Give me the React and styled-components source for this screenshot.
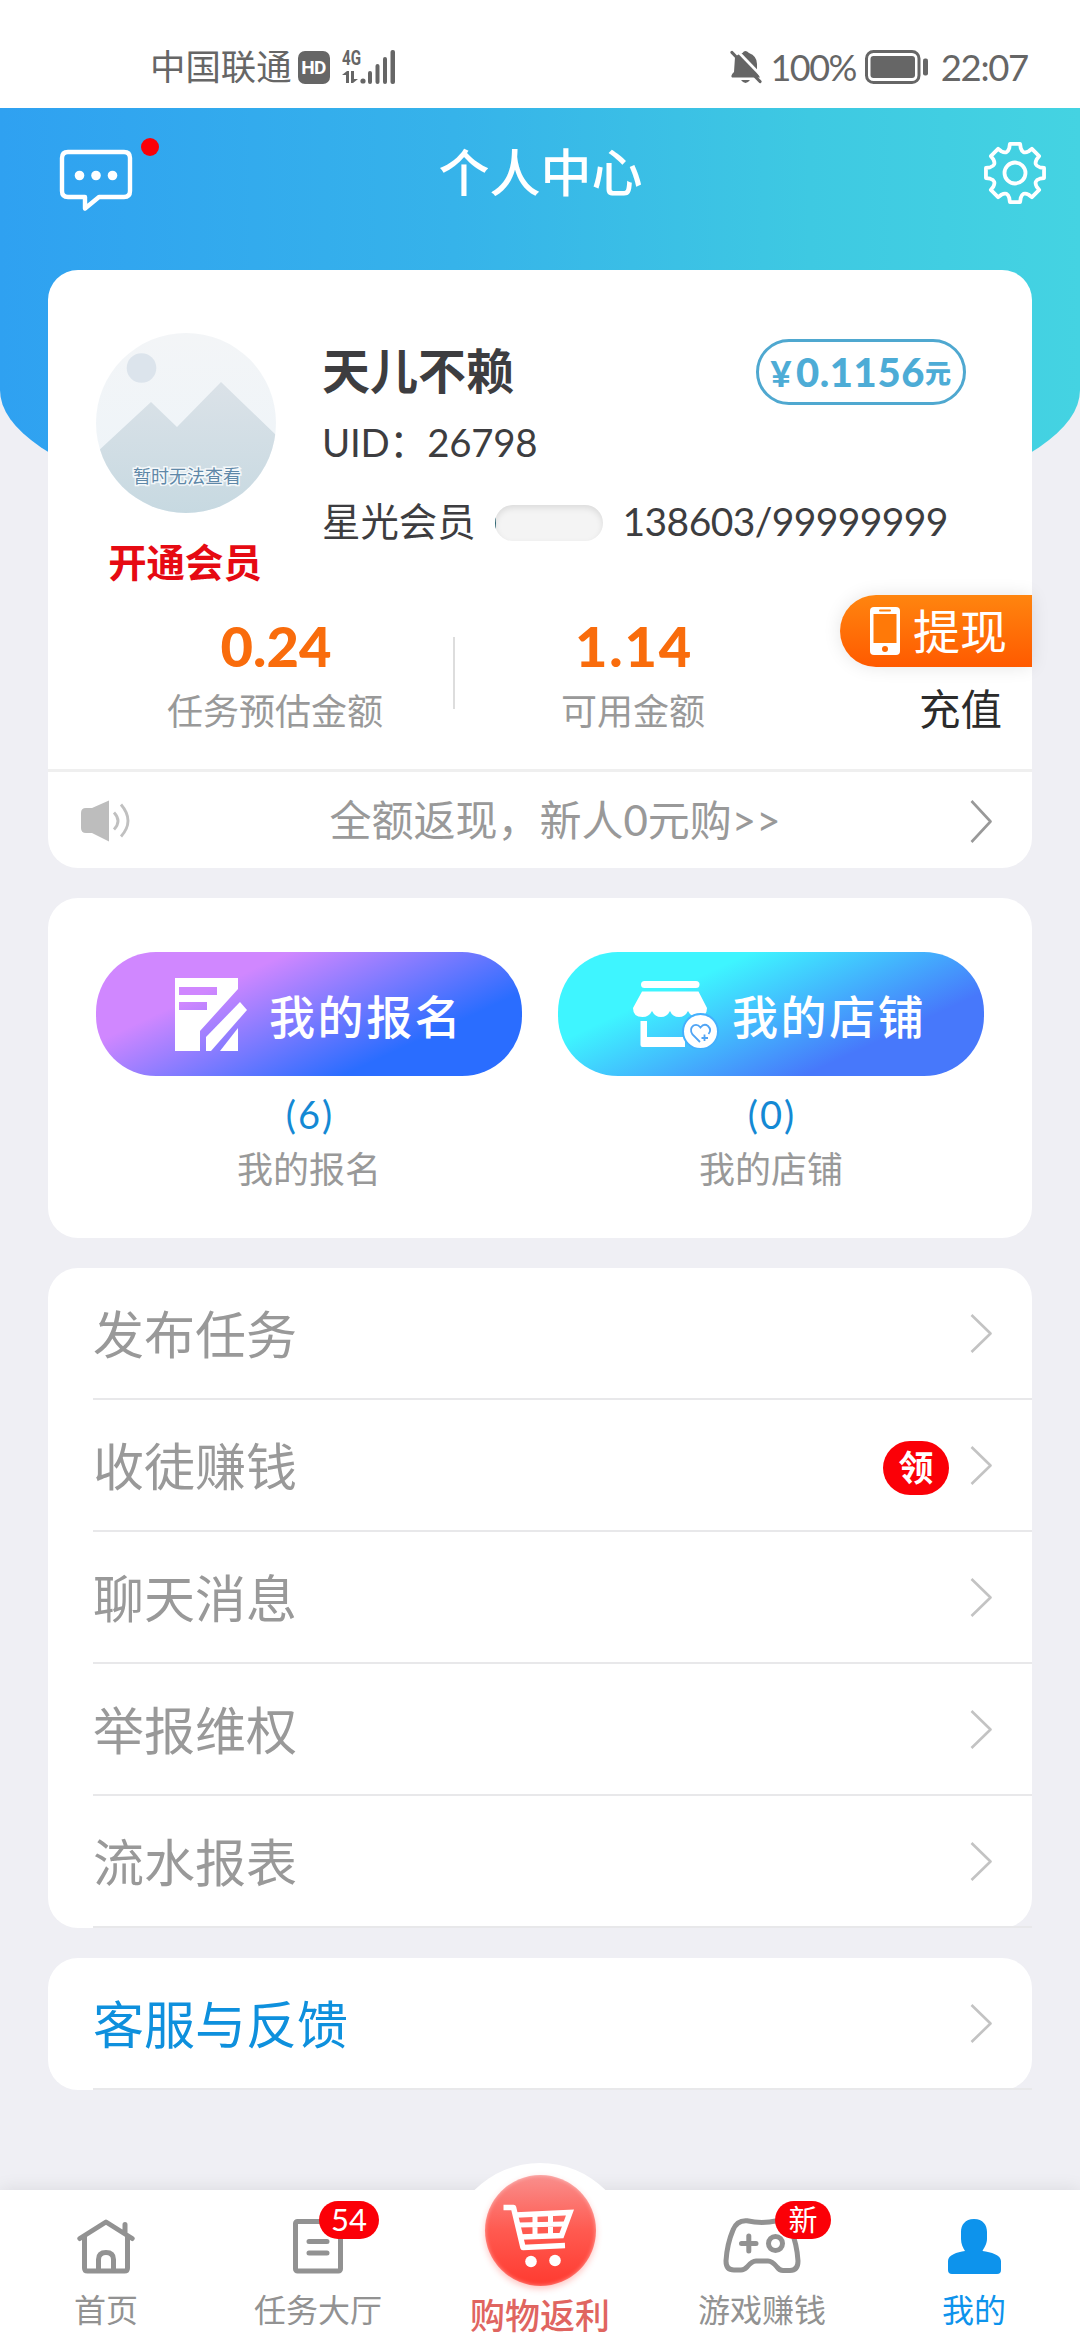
import styled, { createGlobalStyle } from 'styled-components';

const GlobalStyle = createGlobalStyle`
  * {
    box-sizing: border-box;
  }
  body {
    margin: 0;
    background: #efeff4;
    font-family: Lato, "Noto Sans CJK SC", sans-serif;
    color: #3d3d40;
  }
  svg {
    display: block;
    flex: none;
  }
`

const Page = styled.div`
  width: 1080px;
  height: 2340px;
  overflow: hidden;
  display: flex;
  flex-direction: column;
`

/* status bar */

const StatusBar = styled.div`
  flex: none;
  height: 108px;
  padding: 26px 52px 0 150px;
  background: #fff;
  color: #666;
  display: flex;
  justify-content: space-between;
`
const StatusGroup = styled.div`
  display: flex;
  align-items: center;
  height: 82px;
`
const StatusText = styled.span`
  font-size: ${p => p.$size || 36}px;
  line-height: 50px;
  letter-spacing: ${p => p.$spacing || 0}px;
  margin-left: ${p => p.$left || 0}px;
  white-space: nowrap;
`
const HdBadge = styled.span`
  width: 32px;
  height: 33px;
  margin: 0 12px 0 6px;
  border-radius: 7px;
  background: #666;
  color: #fff;
  font: 700 19px/33px Roboto, sans-serif;
  letter-spacing: -0.5px;
  text-align: center;
`

/* header */

const Header = styled.div`
  flex: none;
  height: 432px;
  padding: 30px 33px 0 58px;
  background: linear-gradient(90deg, #2fa1f1 0%, #36b3ea 42%, #3ec9e2 75%, #44d3e2 100%);
  border-radius: 0 0 50% 50% / 0 0 150px 150px;
  display: grid;
  grid-template-columns: 110px 1fr 110px;
`
const MessageButton = styled.div`
  position: relative;
  width: 76px;
  height: 76px;
  padding-top: 10px;
`
const RedDot = styled.i`
  position: absolute;
  left: 83px;
  top: 0;
  width: 18px;
  height: 18px;
  border-radius: 50%;
  background: #fb0007;
`
const Title = styled.h1`
  margin: 0 0 0 -24px;
  color: #fff;
  font-size: 51px;
  font-weight: 500;
  line-height: 70px;
  text-align: center;
`
const SettingsButton = styled.div`
  justify-self: end;
  padding-top: 3px;
`

const Content = styled.main`
  position: relative;
  margin: -270px 48px 0;
  display: flex;
  flex-direction: column;
  gap: 30px;
`
const Card = styled.section`
  background: #fff;
  border-radius: 30px;
  height: ${p => p.$height ? p.$height + 'px' : 'auto'};
`

/* profile */

const Profile = styled.div`
  display: flex;
  height: 318px;
  padding: 63px 66px 0 48px;
`
const AvatarColumn = styled.div`
  width: 180px;
`
const OpenVip = styled.div`
  margin: 24px 0 0 -2px;
  color: #e60a12;
  font-size: 38.4px;
  font-weight: 700;
  line-height: 50px;
  text-align: center;
  white-space: nowrap;
`
const Info = styled.div`
  flex: 1;
  margin: 6px 0 0 46px;
`
const NameRow = styled.div`
  display: flex;
  justify-content: space-between;
  align-items: center;
  height: 66px;
`
const Name = styled.span`
  font-size: 48px;
  font-weight: 700;
  line-height: 58px;
  padding-bottom: 3px;
`
const MoneyPill = styled.span`
  display: flex;
  align-items: center;
  justify-content: center;
  width: 210px;
  height: 66px;
  border: 3px solid #4fa8d0;
  border-radius: 33px;
  color: #4dacd6;
  font-size: 40px;
  font-weight: 900;
  letter-spacing: 0.6px;
  line-height: 60px;
  white-space: nowrap;
`
const Unit = styled.small`
  font-size: ${p => p.$size}px;
  font-weight: 900;
  margin-right: ${p => p.$gap || 0}px;
  padding-top: 2px;
`
const UidRow = styled.div`
  font-size: 38.4px;
  letter-spacing: -0.3px;
  line-height: 74px;
`
const LevelRow = styled.div`
  display: flex;
  align-items: center;
  height: 84px;
  font-size: 38.4px;
  line-height: 50px;
  white-space: nowrap;
`
const Progress = styled.div`
  flex: none;
  width: 108px;
  height: 36px;
  margin: 4px 20px 0 19px;
  border-radius: 18px;
  background: #f4f4f4;
  box-shadow: inset 0 3px 6px rgba(0, 0, 0, 0.1);
  overflow: hidden;
`
const ProgressBar = styled.div`
  height: 100%;
  background: #2f6673;
`
const LevelCount = styled.span`
  font-size: 39px;
  letter-spacing: -0.6px;
`

/* balance */

const Balance = styled.div`
  display: flex;
  height: 184px;
  padding-left: 49px;
  border-bottom: 3px solid #efefef;
`
const Stat = styled.div`
  width: 356px;
  padding-top: 28px;
  text-align: center;
`
const StatValue = styled.div`
  color: #f96c0c;
  font-size: 56px;
  font-weight: 900;
  letter-spacing: ${p => p.$spacing || 0}px;
  line-height: 60px;
  padding-left: 2px;
`
const StatLabel = styled.div`
  margin-top: 10px;
  color: #999;
  font-size: 36px;
  line-height: 50px;
`
const Divider = styled.i`
  width: 2px;
  height: 72px;
  margin-top: 49px;
  background: #ddd;
`
const Actions = styled.div`
  flex: 1;
  display: flex;
  flex-direction: column;
  align-items: flex-end;
  padding-top: 7px;
`
const Withdraw = styled.div`
  display: flex;
  align-items: center;
  width: 192px;
  height: 72px;
  padding-left: 30px;
  border-radius: 36px 0 0 36px;
  background: linear-gradient(#ff850f, #ff5a00);
  box-shadow: 0 0 18px rgba(0, 0, 0, 0.1);
  color: #fff;
  font-size: 47px;
  line-height: 72px;
  white-space: nowrap;

  svg {
    margin-right: 13px;
  }
`
const Recharge = styled.div`
  margin: 17px 30px 0 0;
  color: #2b2b2b;
  font-size: 41.5px;
  line-height: 50px;
`

const Notice = styled.div`
  display: flex;
  align-items: center;
  height: 96px;
  padding: 2px 40px 0 33px;
  color: #999;
  font-size: 42px;
  line-height: 60px;
`
const NoticeText = styled.span`
  flex: 1;
  text-align: center;
  padding: 0 0 2px 9px;
`

/* shortcuts */

const Shortcuts = styled.div`
  display: flex;
  gap: 36px;
  padding: 54px 48px 0;
`
const Shortcut = styled.div`
  width: 426px;
  text-align: center;
  color: #999;
  font-size: 36px;
  line-height: 54px;
`
const ShortcutButton = styled.div`
  display: flex;
  align-items: center;
  gap: ${p => p.$gap}px;
  height: 124px;
  padding-left: ${p => p.$pad}px;
  border-radius: 60px;
  background: linear-gradient(155deg, ${p => p.$from} 28%, ${p => p.$to} 74%);
  color: #fff;
`
const ShortcutTitle = styled.span`
  padding-top: 5px;
  font-size: 46px;
  font-weight: 500;
  letter-spacing: 2.6px;
  white-space: nowrap;
`
const Count = styled.div`
  margin-top: 11px;
  padding: 0 0 1px 2px;
  color: #1489d4;
  font-size: 38px;
  letter-spacing: 2px;
`

/* menu */

const MenuRow = styled.div`
  display: flex;
  align-items: center;
  height: 132px;
  margin-left: 45px;
  padding-right: 40px;
  border-bottom: 2px solid #e8e8ea;
  color: ${p => p.$active ? '#0e90dd' : '#999'};
  font-size: 51px;
`
const MenuLabel = styled.span`
  flex: 1;
  line-height: 70px;
  padding-top: 4px;
`
const MenuTag = styled.span`
  width: 66px;
  height: 54px;
  margin: 5px 21px 0 0;
  border-radius: 27px;
  background: #fb0007;
  color: #fff;
  font-size: 35px;
  font-weight: 700;
  line-height: 52px;
  text-align: center;
`

/* tab bar */

const TabBar = styled.nav`
  position: relative;
  flex: none;
  display: flex;
  height: 150px;
  margin-top: auto;
  background: #fff;
  box-shadow: 0 -2px 16px rgba(0, 0, 0, 0.08);
`
const Tab = styled.div`
  position: relative;
  flex: none;
  width: ${p => p.$wide ? 232 : 212}px;
  padding-top: 28px;
  display: flex;
  flex-direction: column;
  align-items: center;
  color: ${p => p.$color || '#929292'};
`
const TabIcon = styled.div`
  position: relative;
  height: 56px;
`
const TabLabel = styled.span`
  margin-top: 16px;
  font-size: ${p => p.$size || 32}px;
  font-weight: ${p => p.$size ? 500 : 400};
  line-height: ${p => p.$size ? 48 : 40}px;
  white-space: nowrap;
`
const TabBadge = styled.span`
  position: absolute;
  left: ${p => p.$left}px;
  top: -17px;
  width: ${p => p.$width}px;
  height: 38px;
  border-radius: 19px;
  background: #fb0007;
  color: #fff;
  font-size: ${p => p.$size}px;
  line-height: 37px;
  text-align: center;
`
const Bump = styled.div`
  position: absolute;
  left: 23px;
  top: -27px;
  width: 186px;
  height: 186px;
  border-radius: 50%;
  background: #fff;
`
const CartButton = styled.div`
  position: relative;
  width: 111px;
  height: 111px;
  margin-top: -43px;
  border-radius: 50%;
  background: linear-gradient(#f98f8d, #ff5a50 50%, #ff3a30);
  box-shadow: 0 3px 6px rgba(255, 70, 60, 0.3), inset 0 0 4px rgba(255, 255, 255, 0.5);
`
const CartLabel = styled(TabLabel)`
  position: relative;
  margin-top: 5px;
`

const Chevron = ({ color = '#c3c3c3', height = 37 }) => (
  <svg width="22" height={height + 4} viewBox={`0 0 22 ${height + 4}`} fill="none" stroke={color} strokeWidth="2.6">
    <path d={`M1.5 2 L20.5 ${height / 2 + 2} L1.5 ${height + 2}`} strokeLinejoin="round" />
  </svg>
)

const SignalIcon = () => (
  <svg width="54" height="48" viewBox="0 -6 54 48" fill="#666">
    <text x="0" y="16" fontFamily="Roboto" fontWeight="700" fontSize="20" textLength="19" lengthAdjust="spacingAndGlyphs">4G</text>
    <path d="M0 26 L5 22 H7 V34 H4 V26Z M9 22 H12 V30 H16 L11 34 H9Z" />
    <circle cx="21" cy="32" r="2.6" />
    <rect x="26" y="22" width="4" height="13" rx="2" />
    <rect x="33.500" y="15" width="4" height="20" rx="2" />
    <rect x="41" y="8" width="4" height="27" rx="2" />
    <rect x="48.500" y="1" width="4.500" height="34" rx="2" />
  </svg>
)

const BellOffIcon = () => (
  <svg width="32" height="36" viewBox="0 0 32 36" fill="#666">
    <path d="M5 8 Q8 5 12.500 4 Q15 0 19 4 Q27 7 27 15 V23 L30 28.500 H2 Q0 27 4 23Z" />
    <path d="M11 31 H20 Q15.500 37 11 31Z" />
    <path d="M5.500 0 L34.500 30" stroke="#fff" strokeWidth="2.800" />
    <path d="M2 3.500 L30 32.500" stroke="#666" strokeWidth="3.200" strokeLinecap="round" />
  </svg>
)

const BatteryIcon = () => (
  <svg width="64" height="34" viewBox="0 0 64 34" fill="#666">
    <rect x="1.500" y="1.500" width="52.500" height="31" rx="7" fill="none" stroke="#666" strokeWidth="3" />
    <rect x="5.500" y="6" width="44.500" height="22" rx="3" />
    <rect x="58" y="8.500" width="5" height="17" rx="2" />
  </svg>
)

const MessageIcon = () => (
  <svg width="76" height="66" viewBox="0 0 76 66" fill="none" stroke="#fff" strokeWidth="4.400">
    <path d="M10 4 H66 Q72 4 72 10 V43 Q72 49 66 49 H41 L27 60.500 V49 H10 Q4 49 4 43 V10 Q4 4 10 4Z" strokeLinejoin="round" />
    <g fill="#fff" stroke="none">
      <circle cx="21.500" cy="27.500" r="4.800" />
      <circle cx="38" cy="27.500" r="4.800" />
      <circle cx="54.500" cy="27.500" r="4.800" />
    </g>
  </svg>
)

// eight flat teeth joined by round valleys
const polar = (deg, r) => {
  const a = (deg - 90) * Math.PI / 180
  return `${(32 + r * Math.cos(a)).toFixed(2)} ${(32 + r * Math.sin(a)).toFixed(2)}`
}
const gearPath = [0, 45, 90, 135, 180, 225, 270, 315].map((d, i) => (
  `${i ? 'L' : 'M'}${polar(d - 10, 29.5)} L${polar(d + 10, 29.5)} L${polar(d + 13, 25.5)} Q${polar(d + 22.5, 20)} ${polar(d + 32, 25.5)}`
)).join(' ') + 'Z'

const GearIcon = () => (
  <svg width="64" height="64" viewBox="0 0 64 64" fill="none" stroke="#fff" strokeWidth="3.800" strokeLinejoin="round">
    <path d={gearPath} />
    <circle cx="32" cy="32" r="10.500" />
  </svg>
)

const Avatar = () => (
  <svg width="180" height="180" viewBox="0 0 180 180">
    <defs>
      <linearGradient id="sky" x1="0" y1="0" x2="0" y2="1">
        <stop offset="0" stopColor="#f3f5f7" />
        <stop offset="1" stopColor="#edf4f9" />
      </linearGradient>
      <linearGradient id="hill" x1="0" y1="0" x2="0" y2="1">
        <stop offset="0" stopColor="#dbe2e8" />
        <stop offset="1" stopColor="#c7d9e1" />
      </linearGradient>
      <clipPath id="round"><circle cx="90" cy="90" r="90" /></clipPath>
    </defs>
    <g clipPath="url(#round)">
      <rect width="180" height="180" fill="url(#sky)" />
      <circle cx="45.500" cy="35" r="14.800" fill="#dce4ec" />
      <path d="M0 120 L55 69 L81 94 L125 49 L180 102 V180 H0Z" fill="url(#hill)" />
    </g>
    <text x="91" y="150" textAnchor="middle" fontSize="18" fontFamily="Noto Sans CJK SC" fill="#5f88a8"
      stroke="#f4f8fa" strokeWidth="3" paintOrder="stroke">暂时无法查看</text>
  </svg>
)

const PhoneIcon = () => (
  <svg width="30" height="48" viewBox="0 0 30 48">
    <rect width="30" height="48" rx="4" fill="#fff" />
    <rect x="3.500" y="7" width="23" height="29" fill="#ff7908" />
    <rect x="9" y="2.500" width="12" height="2" rx="1" fill="#ff8008" />
    <circle cx="15" cy="42" r="3" fill="#ff6a05" />
  </svg>
)

const SpeakerIcon = () => (
  <svg width="50" height="44" viewBox="0 0 50 44">
    <path d="M0 14 Q0 9 5 9 H11 L28 1.500 V42.500 L11 34 H5 Q0 34 0 29Z" fill="#bdbdbd" />
    <path d="M33 13.500 Q41 22 33 30.500 M40 5.500 Q54 22 40 37.500" fill="none" stroke="#c0c0c0" strokeWidth="2.800" />
  </svg>
)

const SignUpIcon = () => (
  <svg width="72" height="73" viewBox="0 0 72 73" fill="#fff">
    <path fillRule="evenodd" d="M0 0 H63 V11 L25 53 V73 H0Z M4 9 V17 H42 V9Z M4 24 V32 H32 V24Z" />
    <path d="M31 59 L65 24 L72 32 L36 73 H31Z" />
    <path d="M45 73 L63 50 V73Z" />
  </svg>
)

const ShopIcon = () => (
  <svg width="88" height="70" viewBox="6 9 88 70">
    <g fill="#fff">
      <rect x="16" y="11" width="58.500" height="7" rx="3.500" />
      <path d="M17 21.500 H73.500 L82 38 Q82 47 72.500 47 Q66 47 63 41 Q60 47 54 47 Q47.500 47 45 41 Q42 47 36 47 Q30 47 27 41 Q24 47 17.500 47 Q8 47 8 38Z" />
      <path d="M15.500 51 H22 V67 H60 V77 H17.500 Q15.500 77 15.500 75Z" />
    </g>
    <circle cx="75.500" cy="61.500" r="17.500" fill="#fff" stroke="#44b0fd" strokeWidth="2" />
    <path d="M75 72 L67.500 64.500 Q64 59 68.500 55.500 Q72.500 53.500 75.500 57.500 Q79 53 83 56 Q87 60 83.500 64 M79.500 64.500 V71 M76.500 68 H83" fill="none" stroke="#50a4f4" strokeWidth="1.800" />
  </svg>
)

const HomeIcon = () => (
  <svg width="58" height="56" viewBox="0 0 58 56" fill="none" stroke="#929292" strokeWidth="5" strokeLinecap="round" strokeLinejoin="round">
    <path d="M2.800 20.500 L29 4 L55.200 20.500 M48 6.500 V15" />
    <path d="M7.500 19 V50 Q7.500 53 10.500 53 H47.500 Q50.500 53 50.500 50 V19" />
    <path d="M21.500 52 V41.500 Q21.500 34.500 29 34.500 Q36.500 34.500 36.500 41.500 V52" />
  </svg>
)

const TaskIcon = () => (
  <svg width="50" height="56" viewBox="0 0 50 56" fill="none" stroke="#929292" strokeWidth="5" strokeLinecap="round">
    <rect x="2.500" y="3.500" width="45" height="49.500" rx="2" />
    <path d="M16 23.500 H34 M16 35 H34" />
  </svg>
)

const GameIcon = () => (
  <svg width="78" height="56" viewBox="0 0 78 56" fill="none" stroke="#929292" strokeWidth="5" strokeLinecap="round">
    <path d="M24 2.800 Q39 6 54 2.800 Q65 2 68 12 Q74 26 75 43 Q75 52.500 67 52.500 H60 Q56.500 52.500 54 49 Q49 43 45 43 H33 Q29 43 24 49 Q21 52 18 52 H11 Q3 52 3 43 Q4 26 10 12 Q14 2 24 2.800Z" />
    <path d="M18.500 25.500 H33 M25.800 18 V33" />
    <circle cx="52.500" cy="25.500" r="7" />
  </svg>
)

const MineIcon = () => (
  <svg width="53" height="56" viewBox="0 0 53 56" fill="#0d93ec">
    <path d="M26 1 C35 1 39 7 39 14 V21 C39 26 36 30 34.500 33 C43 34 53 37 53 43 V52 Q53 56 49 56 H4 Q0 56 0 52 V43 C0 37 9 34 17 33 C15 30 13 26 13 21 V14 C13 7 17 1 26 1Z" />
  </svg>
)

const CartIcon = () => (
  <svg width="111" height="111" viewBox="0 0 111 111" fill="none" stroke="#fff" strokeWidth="5.500">
    <path d="M18.500 32.500 H28.500 L38 72.500 L80 70.500" strokeWidth="5.500" strokeLinejoin="round" />
    <path d="M31 40 L85 37.500 L76.500 60.500 L36 62" />
    <path d="M34 50 L80 49 M50 41 V61 M65.500 40 V61" strokeWidth="5" />
    <circle cx="46" cy="86.500" r="5.800" fill="#fff" stroke="none" />
    <circle cx="70" cy="85.500" r="5.800" fill="#fff" stroke="none" />
  </svg>
)

const menu = [
  { label: '发布任务' },
  { label: '收徒赚钱', tag: '领' },
  { label: '聊天消息' },
  { label: '举报维权' },
  { label: '流水报表' },
]

function MenuItem({ label, tag, active }) {
  return (
    <MenuRow $active={active}>
      <MenuLabel>{label}</MenuLabel>
      {tag && <MenuTag>{tag}</MenuTag>}
      <Chevron />
    </MenuRow>
  )
}

function App() {
  const level = 138603
  const levelMax = 99999999

  return (
    <Page>
      <GlobalStyle />
      <StatusBar>
        <StatusGroup>
          <StatusText $size={35.4}>中国联通</StatusText>
          <HdBadge>HD</HdBadge>
          <SignalIcon />
        </StatusGroup>
        <StatusGroup>
          <BellOffIcon />
          <StatusText $size={36} $spacing={-1.6} $left={9}>100%</StatusText>
          <StatusText $left={9}><BatteryIcon /></StatusText>
          <StatusText $size={36.5} $spacing={-1.3} $left={12}>22:07</StatusText>
        </StatusGroup>
      </StatusBar>

      <Header>
        <MessageButton>
          <MessageIcon />
          <RedDot />
        </MessageButton>
        <Title>个人中心</Title>
        <SettingsButton><GearIcon /></SettingsButton>
      </Header>

      <Content>
        <Card $height={598}>
          <Profile>
            <AvatarColumn>
              <Avatar />
              <OpenVip>开通会员</OpenVip>
            </AvatarColumn>
            <Info>
              <NameRow>
                <Name>天儿不赖</Name>
                <MoneyPill>
                  <Unit $size={36} $gap={4}>¥</Unit>0.1156<Unit $size={26}>元</Unit>
                </MoneyPill>
              </NameRow>
              <UidRow>UID：26798</UidRow>
              <LevelRow>
                星光会员
                <Progress>
                  <ProgressBar style={{ width: `${level / levelMax * 100}%` }} />
                </Progress>
                <LevelCount>{level}/{levelMax}</LevelCount>
              </LevelRow>
            </Info>
          </Profile>
          <Balance>
            <Stat>
              <StatValue>0.24</StatValue>
              <StatLabel>任务预估金额</StatLabel>
            </Stat>
            <Divider />
            <Stat>
              <StatValue $spacing={1.8}>1.14</StatValue>
              <StatLabel>可用金额</StatLabel>
            </Stat>
            <Actions>
              <Withdraw><PhoneIcon />提现</Withdraw>
              <Recharge>充值</Recharge>
            </Actions>
          </Balance>
          <Notice>
            <SpeakerIcon />
            <NoticeText>全额返现，新人0元购&gt;&gt;</NoticeText>
            <Chevron color="#999" height={41} />
          </Notice>
        </Card>

        <Card $height={340}>
          <Shortcuts>
            <Shortcut>
              <ShortcutButton $from="#d087ff" $to="#2a6dff" $pad={79} $gap={22}>
                <SignUpIcon />
                <ShortcutTitle>我的报名</ShortcutTitle>
              </ShortcutButton>
              <Count>(6)</Count>
              我的报名
            </Shortcut>
            <Shortcut>
              <ShortcutButton $from="#3ef5ff" $to="#4778fb" $pad={73} $gap={13}>
                <ShopIcon />
                <ShortcutTitle>我的店铺</ShortcutTitle>
              </ShortcutButton>
              <Count>(0)</Count>
              我的店铺
            </Shortcut>
          </Shortcuts>
        </Card>

        <Card>
          {menu.map(item => <MenuItem key={item.label} {...item} />)}
        </Card>

        <Card>
          <MenuItem label="客服与反馈" active />
        </Card>
      </Content>

      <TabBar>
        <Tab>
          <TabIcon><HomeIcon /></TabIcon>
          <TabLabel>首页</TabLabel>
        </Tab>
        <Tab>
          <TabIcon>
            <TaskIcon />
            <TabBadge $left={26} $width={60} $size={31}>54</TabBadge>
          </TabIcon>
          <TabLabel>任务大厅</TabLabel>
        </Tab>
        <Tab $wide $color="#e06560">
          <Bump />
          <CartButton><CartIcon /></CartButton>
          <CartLabel $size={35}>购物返利</CartLabel>
        </Tab>
        <Tab>
          <TabIcon>
            <GameIcon />
            <TabBadge $left={52} $width={56} $size={29}>新</TabBadge>
          </TabIcon>
          <TabLabel>游戏赚钱</TabLabel>
        </Tab>
        <Tab $color="#0d93ec">
          <TabIcon><MineIcon /></TabIcon>
          <TabLabel>我的</TabLabel>
        </Tab>
      </TabBar>
    </Page>
  );
}

export default App;
